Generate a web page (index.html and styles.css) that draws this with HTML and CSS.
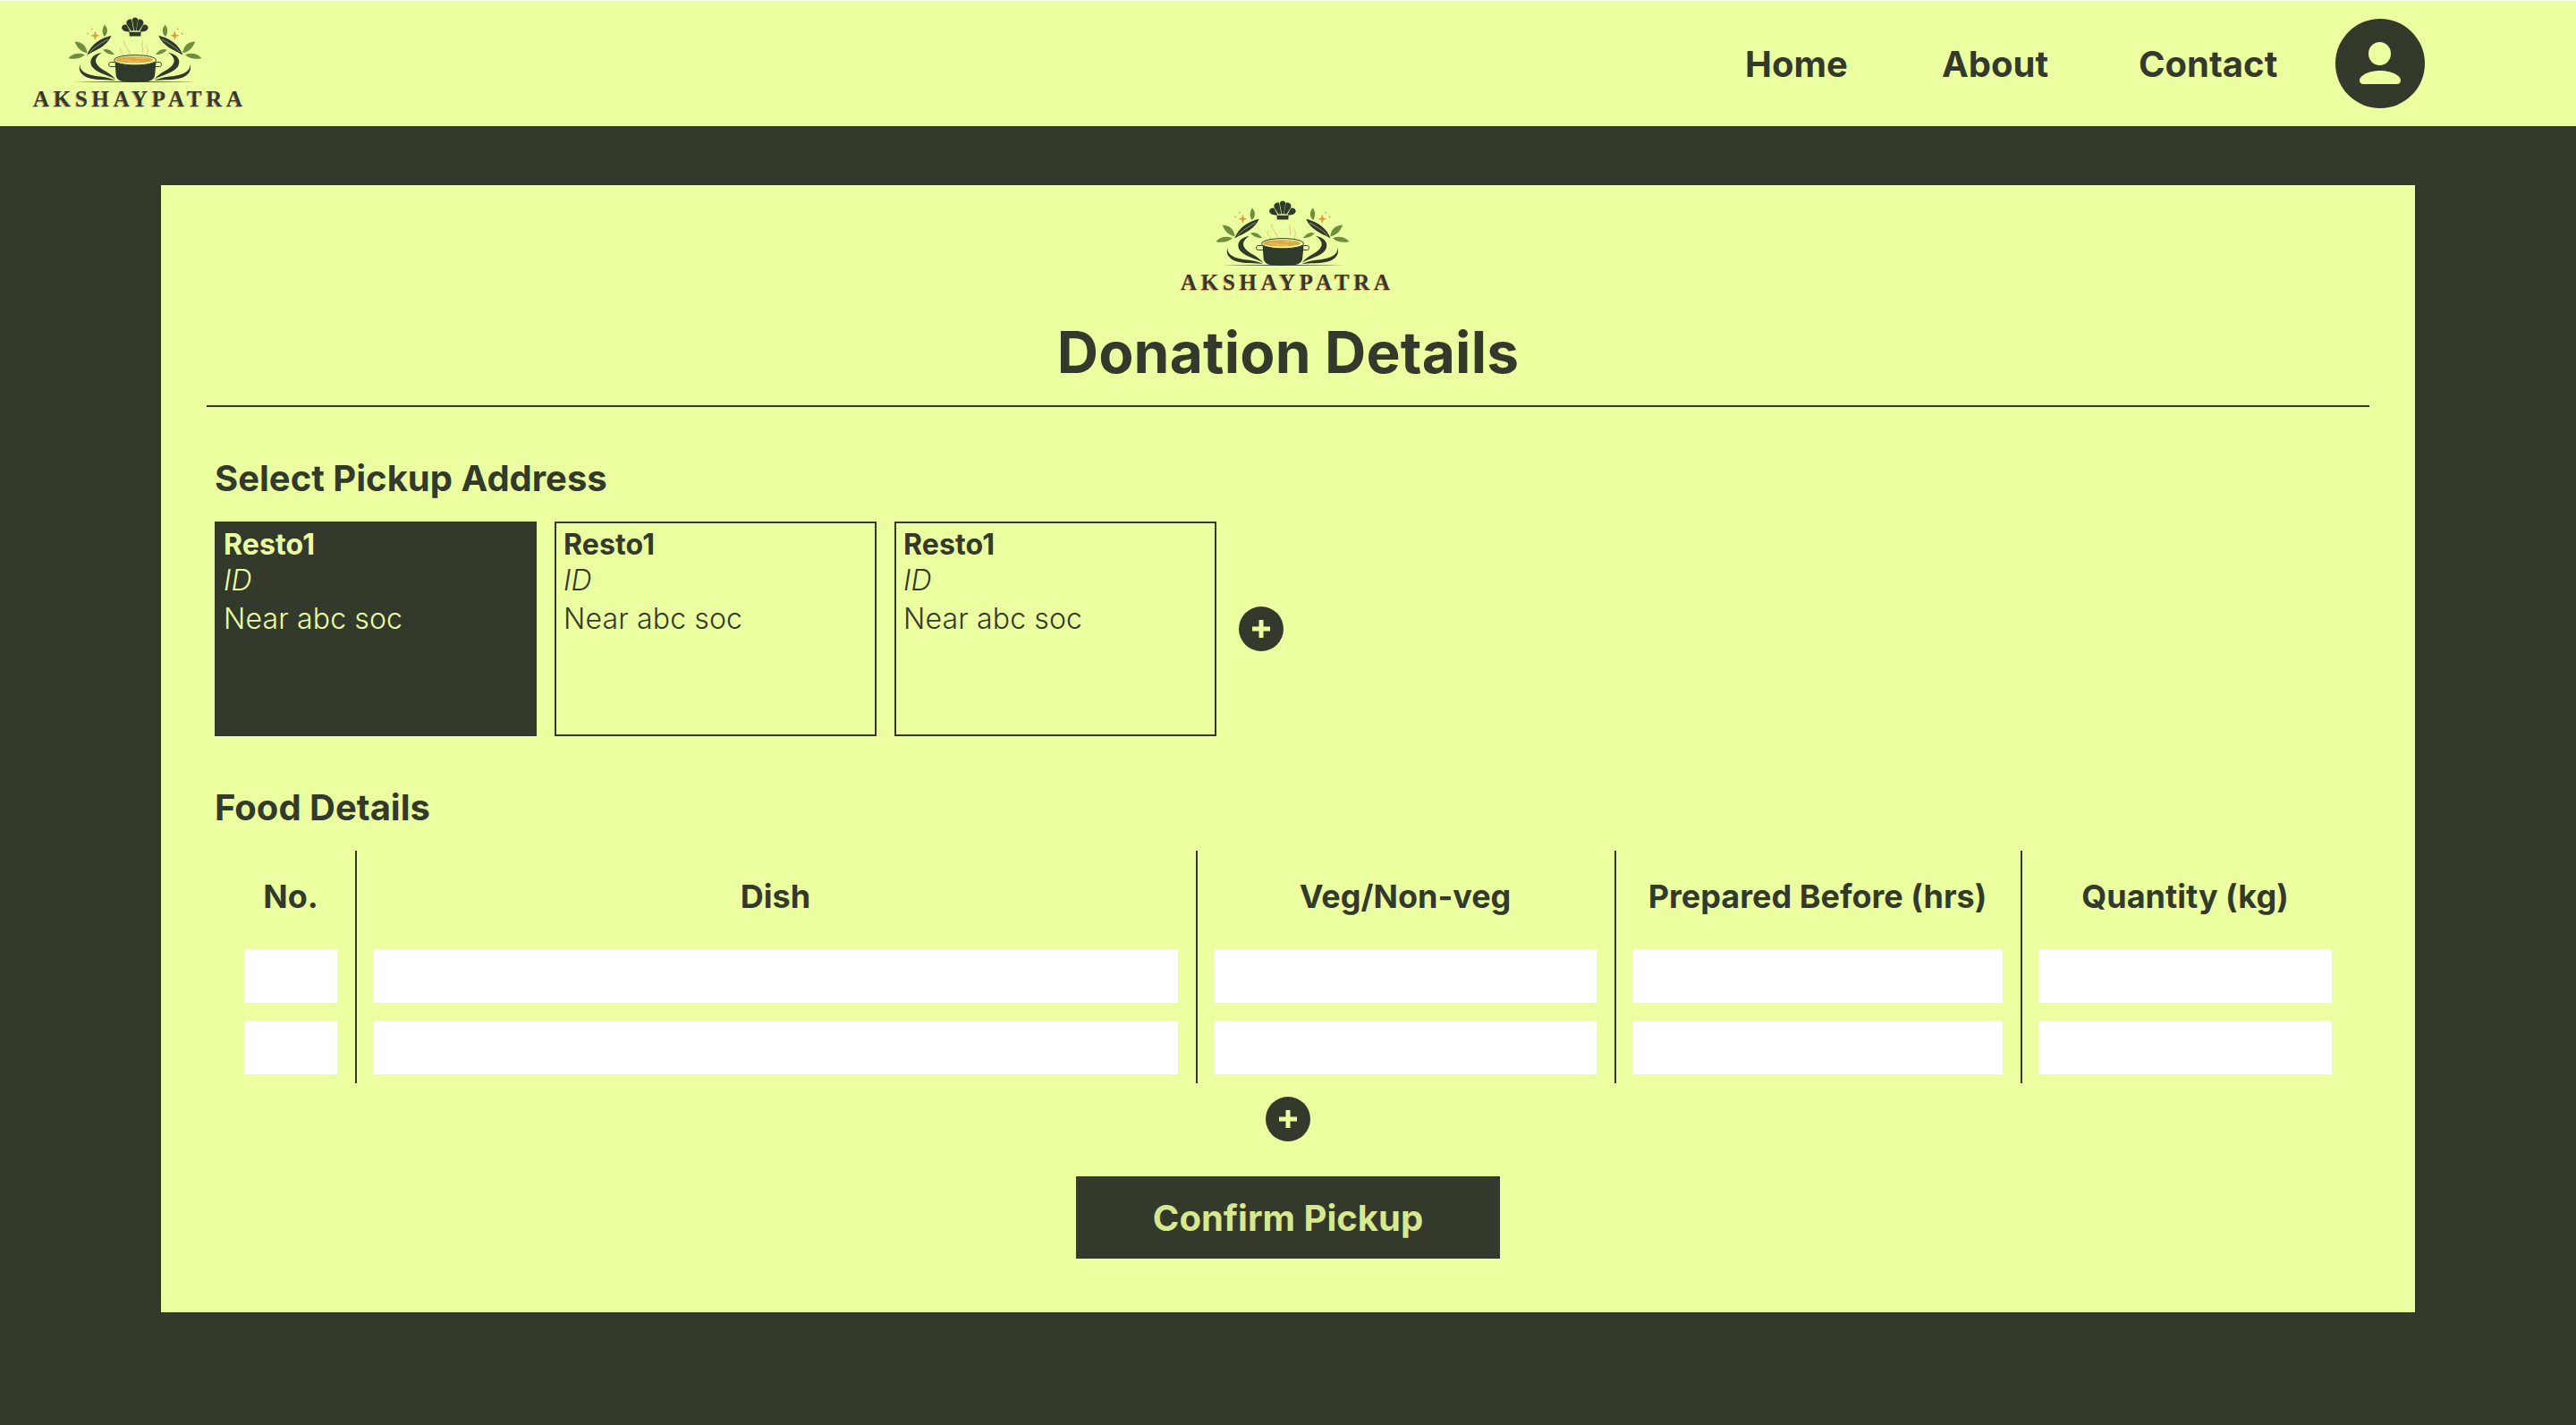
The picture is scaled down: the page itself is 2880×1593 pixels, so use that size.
FILE: index.html
```html
<!DOCTYPE html>
<html lang="en">
<head>
<meta charset="utf-8">
<title>Donation Details</title>
<link rel="stylesheet" href="styles.css">
</head>
<body>
<svg class="defs" width="0" height="0" aria-hidden="true">
  <defs>
    <g id="logo-side">
      <path class="leaf" d="M350 85C362 98 362 115 349 126C340 113 341 97 350 85Z"/>
      <path class="leaf" d="M249 142C270 143 288 153 291 181C270 177 256 163 249 142Z"/>
      <path class="leaf" d="M227 198C240 184 262 178 283 187C268 200 245 204 227 198Z"/>
      <path class="leaf" d="M344 170C358 164 372 170 383 186C368 187 354 181 344 170Z"/>
      <path class="ink" d="M373 122C338 130 304 150 290 188C316 172 356 162 373 122Z"/>
      <path class="midrib" d="M362 134C340 146 316 160 300 178"/>
      <path class="ink" d="M340 180C310 184 294 205 308 228C322 248 358 254 387 270C364 242 332 238 322 216C316 202 324 190 340 180Z"/>
      <path class="ink" d="M268 216C260 240 288 254 316 258C342 261 368 264 387 274C362 270 320 274 292 264C270 256 258 238 268 216Z"/>
      <path class="star" d="M318 106L322 118L334 122L322 126L318 138L314 126L302 122L314 118Z"/>
      <path class="star" d="M307 95L308.500 99L312 100L308.500 101L307 105L305.500 101L302 100L305.500 99Z"/>
      <path class="star" d="M293 110L294.500 114L298 115L294.500 116L293 120L291.500 116L288 115L291.500 114Z"/>
    </g>
    <g id="logo-hat-side">
      <path class="ink" d="M436 108C422 111 406 105 408 94C410 85 418 83 425 86Z"/>
      <path class="ink" d="M439 106L425 84C420 73 429 65 441 67L448 105Z"/>
    </g>
    <g id="logo-art">
      <use href="#logo-side"/>
      <use href="#logo-side" transform="translate(905 0) scale(-1 1)"/>
      <use href="#logo-hat-side"/>
      <use href="#logo-hat-side" transform="translate(905 0) scale(-1 1)"/>
      <path class="ink" d="M450 105L443 68C447 58 459 58 463 68L456 105Z"/>
      <path class="ink" d="M433 110H473L472 124H434Z"/>
      <path class="steam" d="M417 138C410 155 432 165 440 192M404 162C398 175 412 180 414 192M478 140C472 155 484 165 478 178M488 155C505 170 490 178 494 190"/>
      <path class="handle" d="M385 212H370C362 212 362 227 370 227H386M522 212H536C544 212 544 227 536 227H521"/>
      <path class="ink" d="M385 212H524L520 254C519 268 506 277 490 277H417C400 277 389 268 388 254Z"/>
      <ellipse class="rim" cx="453" cy="205" rx="71" ry="17"/>
      <ellipse class="soup" cx="450" cy="204" rx="63" ry="11"/>
      <path class="soup-line" d="M405 205H440M430 210H470M458 199H490"/>
      <path class="ink" d="M245 279L450 277L660 279L450 283Z"/>
    </g>
  </defs>
</svg>

<header class="navbar">
  <a class="logo" href="#">
    <svg class="logo-art" viewBox="90 50 762 230"><use href="#logo-art"/></svg>
    <span class="logo-name">AKSHAYPATRA</span>
  </a>
  <nav class="nav-links">
    <a href="#">Home</a>
    <a href="#">About</a>
    <a href="#">Contact</a>
  </nav>
  <a class="avatar" href="#" aria-label="Profile">
    <svg viewBox="0 0 100 100" width="100" height="100">
      <circle class="avatar-bg" cx="50" cy="50" r="50"/>
      <ellipse class="avatar-fg" cx="49.500" cy="39" rx="12.500" ry="13"/>
      <path class="avatar-fg" d="M31 73C28.500 73 27 71 27 69C27 63 38 58 50 58C62 58 73 63 73 69C73 71 71.500 73 69 73Z"/>
    </svg>
  </a>
</header>

<main class="card">
  <div class="card-head">
    <a class="logo" href="#">
      <svg class="logo-art" viewBox="90 50 762 230"><use href="#logo-art"/></svg>
      <span class="logo-name">AKSHAYPATRA</span>
    </a>
    <h1>Donation Details</h1>
  </div>

  <section class="section">
    <h2>Select Pickup Address</h2>
    <div class="addresses">
      <article class="address selected">
        <strong>Resto1</strong>
        <em>ID</em>
        <span>Near abc soc</span>
      </article>
      <article class="address">
        <strong>Resto1</strong>
        <em>ID</em>
        <span>Near abc soc</span>
      </article>
      <article class="address">
        <strong>Resto1</strong>
        <em>ID</em>
        <span>Near abc soc</span>
      </article>
      <button class="add" type="button" aria-label="Add address">
        <svg viewBox="0 0 50 50" width="50" height="50"><circle class="add-bg" cx="25" cy="25" r="25"/><path class="add-fg" d="M22.500 15H27.500V22.500H35V27.500H27.500V35H22.500V27.500H15V22.500H22.500Z"/></svg>
      </button>
    </div>
  </section>

  <section class="section food">
    <h2>Food Details</h2>
    <table class="food-table">
      <colgroup>
        <col class="col-no"><col class="col-dish"><col class="col-veg"><col class="col-prep"><col class="col-qty">
      </colgroup>
      <thead>
        <tr><th>No.</th><th>Dish</th><th>Veg/Non-veg</th><th>Prepared Before (hrs)</th><th>Quantity (kg)</th></tr>
      </thead>
      <tbody>
        <tr><td><input type="text"></td><td><input type="text"></td><td><input type="text"></td><td><input type="text"></td><td><input type="text"></td></tr>
        <tr><td><input type="text"></td><td><input type="text"></td><td><input type="text"></td><td><input type="text"></td><td><input type="text"></td></tr>
      </tbody>
    </table>
    <div class="food-actions">
      <button class="add" type="button" aria-label="Add row">
        <svg viewBox="0 0 50 50" width="50" height="50"><circle class="add-bg" cx="25" cy="25" r="25"/><path class="add-fg" d="M22.500 15H27.500V22.500H35V27.500H27.500V35H22.500V27.500H15V22.500H22.500Z"/></svg>
      </button>
      <button class="confirm" type="button">Confirm Pickup</button>
    </div>
  </section>
</main>
</body>
</html>
```
FILE: styles.css
```css
* { box-sizing: border-box; }

html, body {
  margin: 0;
  height: 100%;
}

body {
  background: #333a2c;
  color: #333a2c;
  font-family: Inter, "Liberation Sans", sans-serif;
  overflow: hidden;
}

a { color: inherit; text-decoration: none; }

.defs { position: absolute; }

/* Logo artwork */
.ink { fill: #2f3a2b; }
.leaf { fill: #6f8f3c; }
.star { fill: #dd9c3a; }
.midrib { fill: none; stroke: #ebffa1; stroke-width: 1.500; }
.steam { fill: none; stroke: #e3b27a; stroke-width: 2.500; }
.handle { fill: none; stroke: #2f3a2b; stroke-width: 3; }
.rim { fill: #ebffa1; stroke: #2f3a2b; stroke-width: 3; }
.soup { fill: #dfa83f; }
.soup-line { fill: none; stroke: #f3d98a; stroke-width: 2; }

.logo {
  display: flex;
  flex-direction: column;
  width: 254px;
  height: 110px;
}

.logo-art {
  display: block;
  width: 254px;
  height: 77px;
  filter: blur(0.35px);
}

.logo-name {
  margin: 4px 0 0 7px;
  font-family: "Liberation Serif", serif;
  font-weight: 700;
  font-size: 25px;
  line-height: 30px;
  letter-spacing: 4.700px;
  white-space: nowrap;
  color: #333a2c;
  text-shadow: -1px 1px 0 #dfae74;
}

/* Navbar */
.navbar {
  display: flex;
  align-items: center;
  height: 141px;
  padding: 0 169px 0 30px;
  background: #ebffa1;
  border-top: 1px solid #fdfff2;
}

.nav-links {
  display: flex;
  margin-left: auto;
  font-size: 40px;
  font-weight: 700;
}

.nav-links a { width: 220px; }

.avatar {
  display: block;
  width: 100px;
  height: 100px;
}

.avatar svg { display: block; }
.avatar-bg { fill: #333a2c; }
.avatar-fg { fill: #ebffa1; }

/* Card */
.card {
  width: 2520px;
  height: 1260px;
  margin: 66px 0 0 180px;
  padding: 14px 50px 0;
  background: #ebffa1;
}

.card-head {
  display: flex;
  flex-direction: column;
  align-items: center;
  height: 234px;
  margin: 0 1px;
  border-bottom: 2px solid #333a2c;
}

h1 {
  margin: 24px 0 0;
  font-size: 64px;
  font-weight: 700;
  line-height: 77px;
  letter-spacing: 0.200px;
}

h2 {
  margin: 0;
  font-size: 40px;
  font-weight: 700;
  line-height: 48px;
}

.section {
  margin-top: 56px;
  padding-left: 10px;
}

/* Addresses */
.addresses {
  display: flex;
  align-items: center;
  gap: 20px;
  margin-top: 24px;
}

.address {
  display: flex;
  flex-direction: column;
  gap: 1px;
  width: 360px;
  height: 240px;
  padding: 4px 8px;
  border: 2px solid #333a2c;
}

.address strong {
  font-size: 32px;
  font-weight: 700;
  line-height: 39px;
  letter-spacing: 0.150px;
}

.address em {
  font-size: 32px;
  font-weight: 300;
  font-style: italic;
  line-height: 39px;
}

.address span {
  margin-top: 3px;
  font-size: 32px;
  font-weight: 300;
  line-height: 39px;
  letter-spacing: 0.150px;
}

.address.selected {
  background: #333a2c;
  color: #ebffa1;
}

.add {
  display: block;
  width: 50px;
  height: 50px;
  padding: 0;
  border: 0;
  background: none;
}

.add svg { display: block; }
.add-bg { fill: #333a2c; }
.add-fg { fill: #ebffa1; }

.addresses .add { margin-left: 5px; }

/* Food table */
.food-table {
  width: 2372px;
  margin: 24px 0 0 15px;
  table-layout: fixed;
  border-collapse: separate;
  border-spacing: 0;
}

.col-no { width: 144px; }
.col-dish { width: 940px; }
.col-veg { width: 468px; }
.col-prep { width: 454px; }
.col-qty { width: 366px; }

.food-table th,
.food-table td {
  border-right: 2px solid #333a2c;
}

.food-table th:last-child,
.food-table td:last-child {
  border-right: 0;
}

.food-table th {
  height: 100px;
  padding: 2px 2px 0 0;
  font-size: 36px;
  font-weight: 700;
  line-height: 44px;
  text-align: center;
}

.food-table td {
  padding: 10px 20px 10px 18px;
}

.food-table input {
  display: block;
  width: 100%;
  height: 60px;
  padding: 0;
  border: 0;
  border-radius: 0;
  background: #fff;
}

.food-actions {
  display: flex;
  flex-direction: column;
  align-items: center;
  margin: 15px 0 0 -10px;
}

.confirm {
  width: 474px;
  height: 92px;
  margin-top: 39px;
  padding: 0;
  border: 0;
  background: #333a2c;
  color: #d7e88f;
  font-family: inherit;
  font-size: 40px;
  font-weight: 700;
}
```
